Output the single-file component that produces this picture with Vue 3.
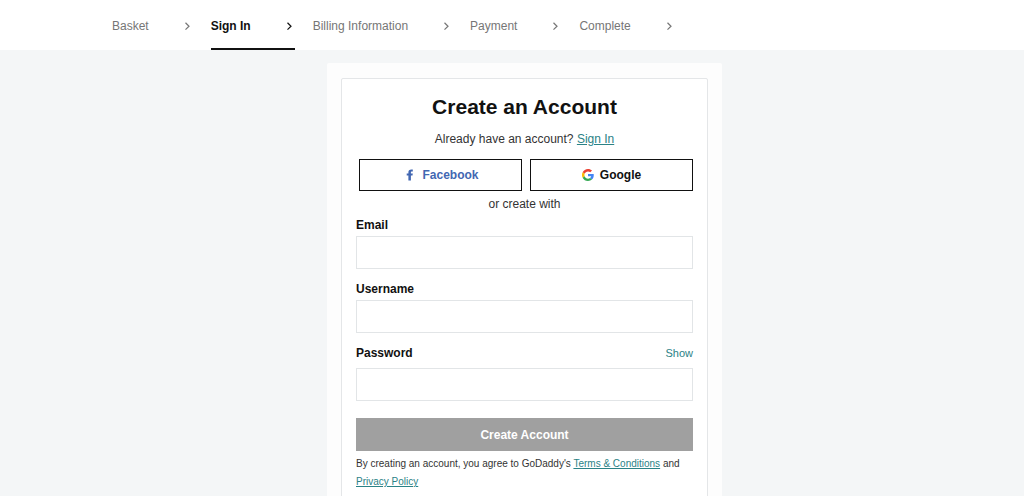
<script setup>
import { ref } from 'vue'

const steps = ['Basket', 'Sign In', 'Billing Information', 'Payment', 'Complete']
const current = 'Sign In'
const email = ref('')
const username = ref('')
const password = ref('')
const visible = ref(false)
</script>

<template>
  <div class="page">
    <header class="header">
      <nav class="steps" aria-label="Checkout steps">
        <div v-for="step in steps" :key="step" class="step" :class="{ active: step === current }">
          <span>{{ step }}</span>
          <svg class="chevron" viewBox="0 0 10 10" aria-hidden="true">
            <path d="M2.500 1.800 6 5.200 2.500 8.600" />
          </svg>
        </div>
      </nav>
    </header>

    <main class="main">
      <section class="card">
        <form class="panel" @submit.prevent>
          <h1 class="title">Create an Account</h1>
          <p class="already">Already have an account? <a href="#signin">Sign In</a></p>

          <div class="social">
            <button type="button" class="provider facebook">
              <svg class="fb-icon" viewBox="0 0 8 12" aria-hidden="true">
                <path d="M2.4 11.600V6.600H.7V4.500h1.700V3.200C2.400 1.400 3.500.5 5.300.5c.7 0 1.200 0 1.500.1v1.900H5.900c-.8 0-1 .4-1 1v1h1.900l-.3 2.100H4.900v5z" />
              </svg>
              <span>Facebook</span>
            </button>
            <button type="button" class="provider">
              <svg class="google-icon" viewBox="0 0 48 48" aria-hidden="true">
                <path fill="#ea4335" d="M24 9.500c3.500 0 6.700 1.200 9.200 3.600l6.900-6.900C35.900 2.400 30.500 0 24 0 14.600 0 6.500 5.400 2.600 13.200l8 6.200C12.400 13.700 17.700 9.500 24 9.500z" />
                <path fill="#4285f4" d="M47 24.600c0-1.600-.2-3.100-.4-4.600H24v9h12.900c-.6 3-2.300 5.500-4.800 7.200l7.700 6C44.400 38 47 31.800 47 24.600z" />
                <path fill="#fbbc05" d="M10.500 28.600A14.500 14.500 0 0 1 10.500 19.400l-8-6.200a24 24 0 0 0 0 21.600z" />
                <path fill="#34a853" d="M24 48c6.500 0 11.900-2.100 15.900-5.800l-7.700-6c-2.200 1.500-4.900 2.300-8.200 2.300-6.300 0-11.600-4.200-13.500-9.900l-8 6.200C6.500 42.600 14.600 48 24 48z" />
              </svg>
              <span>Google</span>
            </button>
          </div>

          <p class="or">or create with</p>

          <div class="field">
            <div class="label-row"><label for="email">Email</label></div>
            <input id="email" v-model="email" type="email" autocomplete="email" />
          </div>
          <div class="field">
            <div class="label-row"><label for="username">Username</label></div>
            <input id="username" v-model="username" type="text" autocomplete="username" />
          </div>
          <div class="field password">
            <div class="label-row">
              <label for="password">Password</label>
              <button type="button" class="show" @click="visible = !visible">{{ visible ? 'Hide' : 'Show' }}</button>
            </div>
            <input id="password" v-model="password" :type="visible ? 'text' : 'password'" autocomplete="new-password" />
          </div>

          <button type="submit" class="submit">Create Account</button>
          <p class="legal">
            By creating an account, you agree to GoDaddy's
            <a href="#terms">Terms &amp; Conditions</a> and <a href="#privacy">Privacy Policy</a>
          </p>
        </form>
      </section>
    </main>
  </div>
</template>

<style>
body {
  margin: 0;
  background: #f4f6f7;
}
</style>

<style scoped>
.page {
  min-height: 100vh;
  background: #f4f6f7;
  color: #333;
  font-family: "Liberation Sans", Arial, Helvetica, sans-serif;
  font-size: 12px;
  line-height: 16px;
}
.page *,
.page {
  box-sizing: border-box;
}
.header {
  background: #fff;
}
.steps {
  display: flex;
  gap: 18px;
  max-width: 800px;
  margin: 0 auto;
}
.step {
  display: flex;
  align-items: center;
  gap: 34px;
  height: 50px;
  padding-top: 4px;
  border-bottom: 2px solid transparent;
  color: #767676;
  white-space: nowrap;
}
.step.active {
  border-bottom-color: #111;
  color: #111;
  font-weight: 700;
}
.chevron {
  width: 10px;
  height: 10px;
  fill: none;
  stroke: currentColor;
  stroke-width: 1.2;
}
.main {
  display: flex;
  justify-content: center;
  padding: 13px 0 0 25px;
}
.card {
  width: 100%;
  max-width: 395px;
  padding: 15px 14px;
  border-radius: 2px;
  background: #fdfdfd;
}
.panel {
  padding: 14px;
  border: 1px solid #e4e6e8;
  border-radius: 2px;
  background: #fff;
}
.title {
  margin: 0;
  color: #111;
  font-size: 21px;
  line-height: 28px;
  text-align: center;
}
.already {
  margin: 10px 0 12px;
  text-align: center;
}
a {
  color: #2b8286;
}
.social {
  display: grid;
  grid-template-columns: 1fr 1fr;
  gap: 8px;
  padding-left: 3px;
}
.provider {
  display: flex;
  align-items: center;
  justify-content: center;
  gap: 6px;
  height: 32px;
  padding: 0;
  border: 1px solid #111;
  background: #fff;
  color: #111;
  font: inherit;
  font-weight: 700;
}
.facebook {
  gap: 8px;
  padding-left: 4px;
  color: #4267b2;
}
.fb-icon {
  width: 8px;
  height: 12px;
  fill: currentColor;
}
.google-icon {
  width: 12px;
  height: 12px;
}
.or {
  margin: 5px 0;
  text-align: center;
}
.field {
  margin-bottom: 12px;
}
.label-row {
  display: flex;
  justify-content: space-between;
  margin-bottom: 3px;
}
label {
  color: #111;
  font-weight: 700;
}
.field.password {
  margin-bottom: 17px;
}
.password .label-row {
  margin-bottom: 7px;
}
input {
  display: block;
  width: 100%;
  height: 33px;
  padding: 0 8px;
  border: 1px solid #e2e5e7;
  border-radius: 0;
  background: #fff;
  color: #111;
  font: inherit;
}
.show {
  padding: 0;
  border: 0;
  background: none;
  color: #2b8286;
  font: inherit;
  font-size: 11px;
}
.submit {
  display: block;
  width: 100%;
  height: 33px;
  padding: 0;
  border: 0;
  background: #a0a0a0;
  color: #fff;
  font: inherit;
  font-weight: 700;
}
.legal {
  margin: 4px 0 0;
  font-size: 10px;
  line-height: 18px;
}
</style>
